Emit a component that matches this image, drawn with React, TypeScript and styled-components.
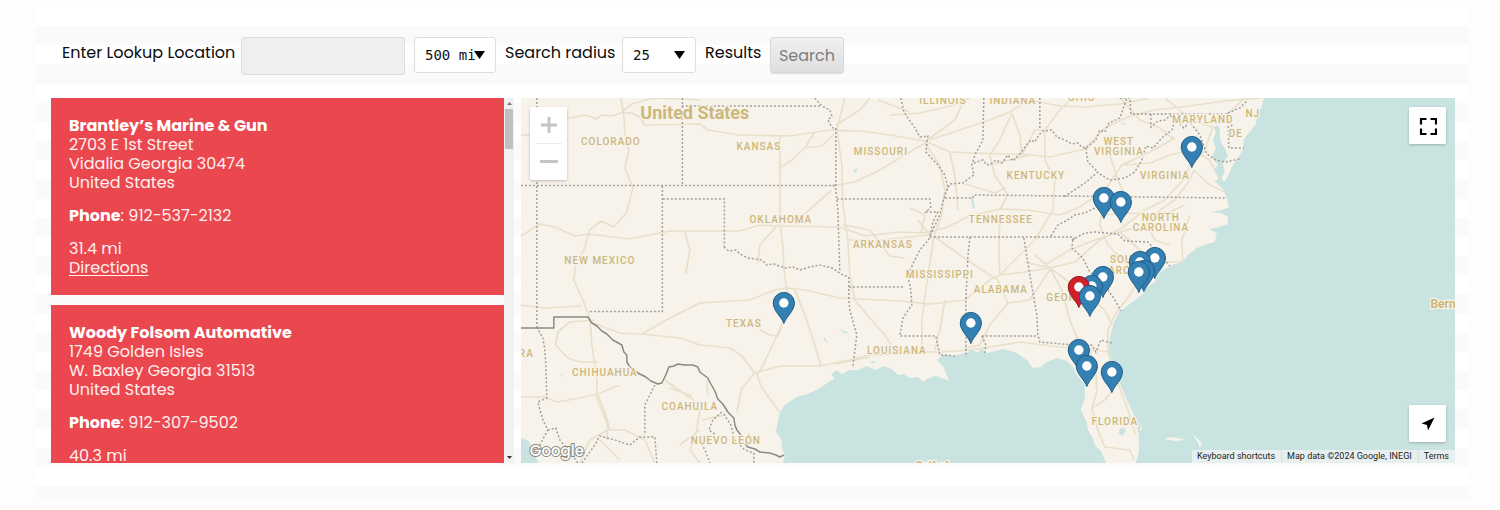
import React from "react";
import styled, { createGlobalStyle } from "styled-components";

const sans = `Poppins, Inter, "Liberation Sans", sans-serif`;
const mapFont = `Roboto, "Liberation Sans", sans-serif`;

const GlobalStyle = createGlobalStyle`
  *, *::before, *::after { box-sizing: border-box; }
  body {
    margin: 0;
    background: #fdfdfd;
    color: #0c0c0c;
    font: 16px/19px ${sans};
  }
`;

const Panel = styled.main`
  margin: 7px 31px 11px 36px;
  padding: 30px 14px 36px 15px;
  background: repeating-linear-gradient(
    #fff 0 19px,
    #fafafa 19px 38px,
    #fff 38px 57px,
    #fafafa 57px 77px,
    #fff 77px 96px,
    #fafafa 96px 115px
  );
`;

const SearchBar = styled.form`
  display: flex;
  align-items: flex-start;
  gap: 9px;
  margin-bottom: 23px;
  padding-left: 11px;
`;

const FieldLabel = styled.label<{ $width: number }>`
  flex: 0 0 ${(p) => p.$width}px;
  min-width: 0;
  padding-top: 6px;
  white-space: nowrap;
`;

const LocationInput = styled.input`
  width: 164px;
  height: 38px;
  padding: 0 10px;
  border: 1px solid #dedede;
  border-radius: 3px;
  background: #efefef;
  font: 16px/19px ${sans};
`;

const SelectBox = styled.div<{ $width: number }>`
  position: relative;
  width: ${(p) => p.$width}px;
  height: 36px;
`;

const Select = styled.select`
  appearance: none;
  width: 100%;
  height: 100%;
  padding: 0 0 0 10px;
  border: 1px solid #dedede;
  border-radius: 3px;
  background: #fff;
  color: #111;
  font: 14px/19px "DejaVu Sans Mono", "Liberation Mono", monospace;
`;

const SelectArrow = styled.svg`
  position: absolute;
  right: 11px;
  top: 14px;
  pointer-events: none;
`;

const SearchButton = styled.button`
  width: 74px;
  height: 36px;
  padding: 0;
  border: 1px solid #d9d9d9;
  border-radius: 3px;
  background: linear-gradient(#f0f0f0, #dfdfdf);
  box-shadow: 0 1px 1px rgba(0, 0, 0, 0.12);
  color: #7d7d7d;
  font: 16px/19px ${sans};
`;

const Results = styled.div`
  display: flex;
  gap: 7px;
  height: 365px;
`;

const ListPane = styled.section`
  display: flex;
  flex: 0 0 33%;
  min-width: 0;
`;

const List = styled.ul`
  flex: 1;
  min-width: 0;
  margin: 0;
  padding: 0;
  list-style: none;
  overflow-y: auto;
  scrollbar-width: none;
`;

const ScrollTrack = styled.div`
  display: flex;
  flex-direction: column;
  align-items: center;
  justify-content: space-between;
  width: 10px;
  padding: 4px 0;
  background: #f1f1f2;
`;

const ScrollHead = styled.div`
  display: flex;
  flex-direction: column;
  align-items: center;
  gap: 4px;
`;

const ScrollThumb = styled.div`
  width: 8px;
  height: 40px;
  background: #bfbfbf;
`;

const Card = styled.li`
  margin-bottom: 10px;
  padding: 18px;
  background: #eb474f;
  color: #fff0ee;
`;

const Lines = styled.p`
  margin: 0 0 14px;
  white-space: pre-line;

  &:last-child {
    margin-bottom: 0;
  }
`;

const Strong = styled.strong`
  font-weight: 700;
  color: #fff;
`;

const DirectionsLink = styled.a`
  color: inherit;
  text-decoration: underline;
  text-underline-offset: 2px;
`;

const MapPane = styled.section`
  position: relative;
  flex: 1;
  min-width: 0;
  overflow: hidden;
  background: #c9e4e0;
`;

const MapCanvas = styled.svg`
  display: block;
  width: 100%;
  height: 100%;
`;

const MapButton = styled.button<{ $height?: number }>`
  display: flex;
  align-items: center;
  justify-content: center;
  width: 37px;
  height: ${(p) => p.$height ?? 37}px;
  padding: 0;
  border: 0;
  background: #fff;
`;

const Control = styled.div<{ $corner: "topLeft" | "topRight" | "bottomRight" }>`
  position: absolute;
  ${(p) =>
    p.$corner === "topLeft"
      ? "top: 9px; left: 9px;"
      : p.$corner === "topRight"
        ? "top: 9px; right: 9px;"
        : "bottom: 21px; right: 9px;"}
  border-radius: 2px;
  background: #fff;
  box-shadow: 0 1px 3px rgba(0, 0, 0, 0.25);
  overflow: hidden;
`;

const Divider = styled.hr`
  width: 26px;
  margin: 0 auto;
  border: 0;
  border-top: 1px solid #eaeaea;
`;

const Attribution = styled.footer`
  position: absolute;
  right: 0;
  bottom: 0;
  display: flex;
  gap: 1px;
  font: 9px/13px ${mapFont};
`;

const attributionPart = `
  padding: 0 6px 0 5px;
  border: 0;
  background: rgba(245, 245, 245, 0.7);
  color: #222;
  font: inherit;
  text-decoration: none;
`;
const AttributionButton = styled.button`
  ${attributionPart}
`;
const AttributionText = styled.span`
  ${attributionPart}
`;
const AttributionLink = styled.a`
  ${attributionPart}
`;

const Land = styled.path`
  fill: #f7f3eb;
`;
const Water = styled.path`
  fill: #c9e4e0;
`;
const Roads = styled.path`
  fill: none;
  stroke: #e9e0ca;
  stroke-width: 1.7;
  stroke-linejoin: round;
`;
const StateLines = styled.path`
  fill: none;
  stroke: #a39f98;
  stroke-width: 1.5;
  stroke-dasharray: 2 2;
`;
const CountryLine = styled.path`
  fill: none;
  stroke: #8c8983;
  stroke-width: 1.5;
  stroke-linejoin: round;
`;
const Place = styled.text<{ $size?: number }>`
  fill: #cdb77a;
  stroke: #f7f3eb;
  stroke-width: 2.5px;
  paint-order: stroke;
  text-anchor: middle;
  font: ${(p) => (p.$size ? 700 : 500)} ${(p) => p.$size ?? 10}px ${mapFont};
  letter-spacing: ${(p) => (p.$size ? 0 : 1)}px;
`;
const Logo = styled.text`
  fill: #fff;
  stroke: #8b8781;
  stroke-width: 2px;
  paint-order: stroke;
  font: 500 15px ${sans};
`;

const stores = [
  {
    name: "Brantley’s Marine & Gun",
    street: "2703 E 1st Street",
    city: "Vidalia Georgia 30474",
    phone: "912-537-2132",
    distance: "31.4 mi",
  },
  {
    name: "Woody Folsom Automative",
    street: "1749 Golden Isles",
    city: "W. Baxley Georgia 31513",
    phone: "912-307-9502",
    distance: "40.3 mi",
  },
];

const land =
  "M521 98H1264L1262 106 1258 114 1256 124 1250 132 1244 139 1243 150 1238 158 1232 167 1228 176 1224 182 1222 178 1225 170 1223 164 1228 156 1226 150 1222 144 1220 138 1220 130 1218 125 1214 127 1216 133 1213 140 1216 148 1212 157 1218 165 1214 170 1220 178 1215 181 1223 189 1227 198 1229 207 1222 210 1210 212 1220 213 1228 216 1228 224 1219 227 1209 229 1217 233 1215 242 1207 244 1197 248 1188 255 1183 262 1172 265 1160 272 1155 282 1147 287 1143 294 1130 304 1120 311 1114 322 1110 338 1109 352 1115 372 1122 388 1128 402 1135 418 1139 435 1139 452 1136 463H1106L1102 452 1095 445 1093 438 1088 430 1087 422 1081 410 1085 398 1085 385 1077 375 1074 368 1067 361 1057 358 1047 362 1041 367 1033 368 1028 361 1017 353 1003 349 987 353 981 348 978 353 973 350 965 353 953 356 945 354 937 360 944 367 946 374 950 381 942 378 936 376 927 379 924 382 918 377 910 378 904 374 898 375 892 369 883 366 876 370 867 366 858 370 850 370 842 374 836 370 831 375 835 378 820 388 808 394 797 397 785 405 780 413 778 422 776 432 782 440 782 448 785 456 783 463H521Z";

const lakes =
  "M521 438 529 441 532 449 539 463H521ZM1120 429 1124 427 1126 432 1122 436 1119 433ZM839 329 848 332 846 334ZM853 170 858 168 856 173ZM561 374 563 374 562 377ZM823 338 826 338 828 344ZM870 362l4 -1 2 3ZM971 197l2 1 2 10 -2 1ZM1122 122l3 1 -1 3Z";

const islands =
  "M1164 439 1170 437 1178 438 1185 440 1176 441ZM1192 434 1197 438 1202 443 1200 448 1198 442ZM1141 423l1 6 -2 2Z";

const roads = [
  "M521 135H530M567 118 575 117 585 115 592 117 596 119 602 115 612 116 621 113 632 113 640 117 645 125 700 124 708 130 740 135 790 136 830 130 860 131 890 135 925 141 950 152 1000 154 1022 154 1050 157 1085 149 1105 128 1130 116 1155 110 1190 106 1225 101 1262 98",
  "M621 98 624 115 625 135 629 150 625 168 633 188 627 212 620 220 614 227 601 221 590 230 584 250 576 262 574 280 583 300 590 318 592 345 597 380 597 398 608 425 607 440",
  "M521 236 540 224 555 227 575 236 590 234 630 239 655 234 670 231 740 231 760 225 778 226 840 227 865 236 900 232 925 233 945 228 970 216 1000 209 1028 210 1060 215 1080 207 1105 190 1122 165 1150 152 1175 138",
  "M622 112 632 104 650 99 660 98M685 232 690 250 686 274M780 136 780 170 780 222 783 245 784 268 787 290M780 168 792 160 805 148 815 132M805 148 822 146 835 134M777 226 760 245 758 262M800 218 815 205 832 190",
  "M521 305 545 308 582 306M590 322 620 333 642 334 680 338 700 345 730 348 742 356 755 373 780 366 820 366 840 362 870 355 900 354 925 352 940 352 970 350 990 347 1020 342 1060 347 1095 350 1108 352",
  "M642 334 670 318 700 303 730 301 750 300 775 290 787 288 805 290 840 298 900 301 930 304 965 300 990 280 1000 275 1025 272 1050 268 1075 262 1100 240 1122 228 1145 210 1165 200 1185 178 1192 160",
  "M787 290 784 320 775 340 762 368 757 375 762 388 780 412M755 373 742 388 737 412M795 290 805 315 815 345 821 366M784 318 778 337M760 330 770 335 776 336",
  "M595 320 570 322 558 332 556 345 568 358 580 362 598 362M521 397 545 397 557 402 580 398 598 394 620 385M598 395 606 415 610 430 625 430 645 440 655 463M608 430 590 440 580 463M665 380 690 398",
  "M670 388 690 395 700 410 697 430 690 450 700 463M707 380 708 395M702 420 725 415M600 440 620 460M680 445 700 430",
  "M845 98 837 130 842 165 843 205 848 240 850 275 855 300 870 318 885 335 892 346M831 186 855 182 880 170 900 158 925 143M925 143 940 165 945 190 942 215 934 236 930 263 926 290 922 320 922 352M925 142 955 120 965 98M890 115 920 113 955 105 970 98M878 100 910 112",
  "M950 153 955 175 958 210M930 140 960 130 990 120 1010 112 1030 100 1060 106 1085 107 1120 104 1150 98M1012 113 1020 135 1022 155 1035 130 1045 130M1012 113 1000 140 990 155 995 175 1008 195 1000 210M1045 130 1045 160 1055 180 1053 210 1035 240 1020 255 1000 275M1045 130 1060 110 1072 98M965 184 995 193 1006 188",
  "M843 225 870 230 890 256 905 258M848 240 880 240 930 235M930 235 918 220M934 236 960 255 990 275 998 280 1008 303 990 325 980 345M1008 303 1030 300 1050 270M1000 276 999 250 1000 215M1050 268 1062 290 1070 320 1080 345M1050 268 1080 290 1105 310 1112 325M1050 268 1035 255M1050 268 1025 262",
  "M1045 265 1070 250 1095 240 1120 232 1145 225 1160 210 1175 200 1190 180 1194 170M1103 200 1100 225 1108 245 1125 262 1140 280M1120 232 1140 250 1160 262 1182 262M1110 155 1118 180 1125 195M1105 215 1125 213 1150 214 1170 212 1185 205M1125 165 1150 163 1170 155 1192 150 1210 160 1220 180",
  "M1194 170 1210 185 1225 192M1192 165 1205 150 1213 127 1190 120 1180 110 1165 98M1213 120 1230 112 1245 98M1108 350 1112 370 1120 388 1128 410 1136 435M1090 350 1096 372 1097 392 1092 408 1098 430 1105 447 1130 450 1134 460M1092 408 1105 400 1113 390M1108 352 1108 330 1115 315 1130 295 1145 270 1155 255M870 98 860 110 836 125M990 165 1030 155",
  "M655 98 700 100M980 345 965 348M945 300 940 330 935 350M836 364 870 357M921 233 925 215 910 208M1170 245 1155 240 1150 230M1190 215 1182 240 1183 262M1120 98 1140 120 1160 128 1175 140",
].join("");

const stateLines = [
  "M537 98V327M521 185.500H837M682.500 98V185M682 106H820M662.500 186V311.500H588M663 199H724.500V247M537 327 543 338 545 350 546 365 547 398 538 402 543 420 548 430 540 445 530 455M548 430 556 428 560 440 570 452 578 463M655 385 645 405 645 435M582 463 595 445 600 436 615 440 630 445 640 437 655 437 657 463",
  "M724 247 729 251 736 250 740 254 748 258 755 259 762 260 767 265 774 264 785 268 793 267 800 270 810 267 820 265 832 268 843 275 849 277M836 128V190L838 210 840 272M849 277V300L850 310 857 335 855 350 853 368M849 287H905M815 98 822 106 830 110 832 116 828 120 832 127 836 130",
  "M837 199H930L931 207 926 212 938 212 933 222 930 238 920 250 914 262 908 275 911 290 912 305 903 318 900 336H936L940 355 955 356",
  "M901 98 904 112 915 128 920 137 928 136 926 152 938 165 945 175 948 187 944 198 940 215 930 236M984 98 983 140 975 155 972 165 974 175 963 183 950 184 945 195M974 163 983 160 987 165 991 164 996 160 1002 163 1008 155 1013 161 1020 154 1026 146 1031 140 1035 142 1039 135 1043 131 1052 130 1057 137 1065 140 1072 144 1078 143 1082 147 1086 148 1096 140 1100 130 1105 132 1109 123 1120 118 1127 98",
  "M1040 98V130M1086 148 1088 162 1098 172 1085 183 1070 193 1064 197M945 198H973L974 195 1070 196 1227 198M930 237H1073L1076 241M970 237 968 257 966 300 966 357M1024 238 1030 275 1037 315 1038 335 1040 342 1085 346 1092 345 1096 352 1101 340 1112 343M982 336H1036M982 336 986 345 985 353",
  "M1051 236 1058 225 1066 221 1075 215 1085 213 1095 208 1103 200 1108 197M1072 240 1085 233 1095 232 1118 234 1125 241 1148 242 1170 266M1073 240 1072 248 1083 258 1090 272 1105 285 1115 300 1121 311M1100 174 1110 180 1125 178 1135 172 1142 160 1146 146 1153 148 1162 138 1172 130 1176 118 1180 124 1184 128 1190 122 1200 135 1207 154 1216 160 1225 162 1240 159",
  "M1120 98 1130 98 1131 114H1228M1151 114V127L1158 121 1165 120 1170 116 1178 118M1228 114 1229 148H1244M1228 113 1240 108 1248 100M1228 113 1232 125 1230 131",
  "M722 412 713 420 709 430 715 434M700 440 706 452 710 463M724 414 731 425 735 440 745 450 754 453V463",
].join("");

const countryLine =
  "M521 328H554V317H588L592 323 597 326 602 331 607 334 613 340 622 345 624 352 627 355 627 362 630 367 635 371 640 374 646 377 651 381 658 384 662 383 666 375 669 367 674 366 678 364 685 365 693 365 698 367 700 372 708 378 711 384 715 391 718 399 723 404 728 412 734 418 735 425 737 430 741 435 744 442 748 447 755 449 760 452 770 453 776 455 780 457 784 455";

const places: [string, number, number, number?][] = [
  ["United States", 695, 119, 18],
  ["ILLINOIS", 943, 104],
  ["INDIANA", 1013, 104],
  ["OHIO", 1082, 101],
  ["COLORADO", 611, 145],
  ["KANSAS", 759, 150],
  ["MISSOURI", 881, 155],
  ["WEST", 1119, 145],
  ["VIRGINIA", 1119, 155],
  ["MARYLAND", 1203, 123],
  ["NJ", 1253, 117],
  ["DE", 1236, 137],
  ["KENTUCKY", 1036, 179],
  ["VIRGINIA", 1165, 179],
  ["OKLAHOMA", 781, 223],
  ["TENNESSEE", 1001, 223],
  ["NORTH", 1161, 221],
  ["CAROLINA", 1161, 231],
  ["ARKANSAS", 883, 248],
  ["NEW MEXICO", 600, 264],
  ["SOUTH", 1129, 263],
  ["CAROLINA", 1129, 274],
  ["MISSISSIPPI", 940, 278],
  ["ALABAMA", 1001, 293],
  ["GEORGIA", 1071, 301],
  ["TEXAS", 744, 327],
  ["LOUISIANA", 897, 354],
  ["SONORA", 511, 357],
  ["CHIHUAHUA", 605, 376],
  ["COAHUILA", 690, 410],
  ["FLORIDA", 1115, 425],
  ["NUEVO LEÓN", 726, 444],
  ["Gulf of", 932, 469, 11],
  ["Bermuda", 1455, 308, 12],
];

const pins: [number, number, boolean?][] = [
  [1192, 147],
  [1104, 198],
  [1121, 202],
  [1155, 258],
  [1140, 262],
  [1144, 271],
  [1139, 272],
  [1103, 277],
  [1092, 286],
  [1079, 287, true],
  [1090, 296],
  [784, 303],
  [971, 323],
  [1079, 350],
  [1087, 366],
  [1112, 372],
];

const Pin = ({ x, y, home }: { x: number; y: number; home?: boolean }) => (
  <g transform={`translate(${x} ${y})`}>
    <path
      d="M0 20.500C-2 14-10.600 8-10.600 0A10.600 10.600 0 0 1 10.600 0C10.600 8 2 14 0 20.500Z"
      fill={home ? "#d0202a" : "#3580b2"}
      stroke={home ? "#8f1219" : "#1d5c87"}
    />
    <circle r="4.700" fill="#fff" />
  </g>
);

const Triangle = () => (
  <SelectArrow width="11" height="8" viewBox="0 0 11 8" aria-hidden="true">
    <path d="M0 0H11L5.500 8Z" />
  </SelectArrow>
);

const StoreCard = ({ store }: { store: (typeof stores)[number] }) => (
  <Card>
    <Lines>
      <Strong>{store.name}</Strong>
      {`\n${store.street}\n${store.city}\nUnited States`}
    </Lines>
    <Lines>
      <Strong>Phone</Strong>: {store.phone}
    </Lines>
    <Lines>
      {`${store.distance}\n`}
      <DirectionsLink href="#directions">Directions</DirectionsLink>
    </Lines>
  </Card>
);

const StoreMap = () => (
  <MapPane aria-label="Store map">
    <MapCanvas viewBox="521 98 934 365" preserveAspectRatio="xMidYMid slice">
      <Land d={land} />
      <Land d={islands} />
      <Water d={lakes} />
      <Roads d={roads} clipPath="url(#land)" />
      <clipPath id="land">
        <path d={land} />
      </clipPath>
      <StateLines d={stateLines} />
      <CountryLine d={countryLine} />
      {places.map(([name, x, y, size]) => (
        <Place key={`${name}${x}`} x={x} y={y} $size={size}>
          {name}
        </Place>
      ))}
      {pins.map(([x, y, home]) => (
        <Pin key={`${x}-${y}`} x={x} y={y} home={home} />
      ))}
      <Logo x="530" y="456">
        Google
      </Logo>
    </MapCanvas>
    <Control $corner="topLeft">
      <MapButton type="button" aria-label="Zoom in" $height={36}>
        <svg width="18" height="18" viewBox="0 0 18 18">
          <path d="M7.500 1h3v6.500H17v3h-6.500V17h-3v-6.500H1v-3h6.500Z" fill="#c4c4c4" />
        </svg>
      </MapButton>
      <Divider />
      <MapButton type="button" aria-label="Zoom out" $height={36}>
        <svg width="18" height="18" viewBox="0 0 18 18">
          <path d="M0 7h18v3H0Z" fill="#c4c4c4" />
        </svg>
      </MapButton>
    </Control>
    <Control $corner="topRight">
      <MapButton type="button" aria-label="Toggle fullscreen view">
        <svg width="18" height="18" viewBox="0 0 18 18">
          <path
            d="M2 7.500V2H7.500M11.500 2H17V7.500M17 11.500V17H11.500M7.500 17H2V11.500"
            fill="none"
            stroke="#000"
            strokeWidth="2.200"
          />
        </svg>
      </MapButton>
    </Control>
    <Control $corner="bottomRight">
      <MapButton type="button" aria-label="Show my location">
        <svg width="14" height="14" viewBox="0 0 14 14">
          <path d="M13.500.500 7 13.500 6 8 .500 6.500Z" />
        </svg>
      </MapButton>
    </Control>
    <Attribution>
      <AttributionButton type="button">Keyboard shortcuts</AttributionButton>
      <AttributionText>Map data ©2024 Google, INEGI</AttributionText>
      <AttributionLink href="#terms">Terms</AttributionLink>
    </Attribution>
  </MapPane>
);

export default function App() {
  return (
    <>
      <GlobalStyle />
      <Panel>
        <SearchBar onSubmit={(e) => e.preventDefault()}>
          <FieldLabel htmlFor="location" $width={170}>
            Enter Lookup Location
          </FieldLabel>
          <LocationInput id="location" type="text" />
          <SelectBox $width={82}>
            <Select id="radius" defaultValue="500 mi">
              <option>500 mi</option>
            </Select>
            <Triangle />
          </SelectBox>
          <FieldLabel htmlFor="radius" $width={108}>
            Search radius
          </FieldLabel>
          <SelectBox $width={74}>
            <Select id="count" defaultValue="25">
              <option>25</option>
            </Select>
            <Triangle />
          </SelectBox>
          <FieldLabel htmlFor="count" $width={56}>
            Results
          </FieldLabel>
          <SearchButton type="submit">Search</SearchButton>
        </SearchBar>
        <Results>
          <ListPane aria-label="Stores">
            <List>
              {stores.map((store) => (
                <StoreCard key={store.name} store={store} />
              ))}
            </List>
            <ScrollTrack aria-hidden="true">
              <ScrollHead>
                <svg width="5" height="3" viewBox="0 0 5 3">
                  <path d="M0 3H5L2.500 0Z" fill="#777" />
                </svg>
                <ScrollThumb />
              </ScrollHead>
              <svg width="5" height="3" viewBox="0 0 5 3">
                <path d="M0 0H5L2.500 3Z" fill="#333" />
              </svg>
            </ScrollTrack>
          </ListPane>
          <StoreMap />
        </Results>
      </Panel>
    </>
  );
}
